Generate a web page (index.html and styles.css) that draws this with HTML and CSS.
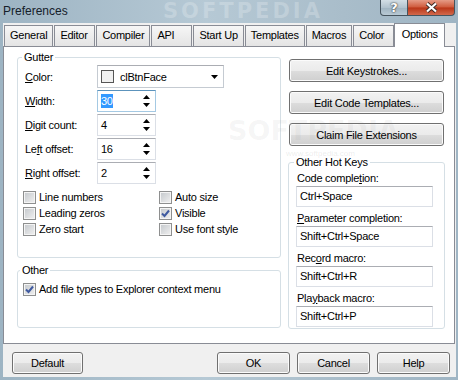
FILE: index.html
```html
<!DOCTYPE html>
<html>
<head>
<meta charset="utf-8">
<title>Preferences</title>
<link rel="stylesheet" href="styles.css">
</head>
<body>
<div class="window">
  <div class="titlebar">
    <span class="title">Preferences</span>
    <span class="watermark">SOFTPEDIA</span>
    <div class="caption-buttons">
      <div class="cap help">?</div>
      <div class="cap close">
        <svg width="13" height="11" viewBox="0 0 13 11"><path d="M2 1.5 L11 9.5 M11 1.5 L2 9.5" stroke="#3a2a26" stroke-width="4"/><path d="M2 1.5 L11 9.5 M11 1.5 L2 9.5" stroke="#fff" stroke-width="2.2"/></svg>
      </div>
    </div>
  </div>

  <div class="client">
    <div class="tabs">
      <div class="tab">General</div>
      <div class="tab">Editor</div>
      <div class="tab">Compiler</div>
      <div class="tab">API</div>
      <div class="tab">Start Up</div>
      <div class="tab">Templates</div>
      <div class="tab">Macros</div>
      <div class="tab">Color</div>
      <div class="tab active">Options</div>
    </div>

    <div class="pane">
      <div class="left">
        <fieldset class="group gutter">
          <legend>Gutter</legend>
          <div class="fields">
            <label><u>C</u>olor:</label>
            <div class="combo">
              <span class="swatch"></span>
              <span class="combo-text">clBtnFace</span>
              <svg class="drop" width="7" height="4" viewBox="0 0 7 4"><polygon points="0,0 7,0 3.5,4"/></svg>
            </div>

            <label><u>W</u>idth:</label>
            <div class="spin focused">
              <span class="val"><span class="sel">30</span></span>
              <span class="arrows">
                <svg width="7" height="4" viewBox="0 0 7 4"><polygon points="0,4 3.5,0 7,4"/></svg>
                <svg width="7" height="4" viewBox="0 0 7 4"><polygon points="0,0 7,0 3.5,4"/></svg>
              </span>
            </div>

            <label><u>D</u>igit count:</label>
            <div class="spin">
              <span class="val">4</span>
              <span class="arrows">
                <svg width="7" height="4" viewBox="0 0 7 4"><polygon points="0,4 3.5,0 7,4"/></svg>
                <svg width="7" height="4" viewBox="0 0 7 4"><polygon points="0,0 7,0 3.5,4"/></svg>
              </span>
            </div>

            <label>Le<u>f</u>t offset:</label>
            <div class="spin">
              <span class="val">16</span>
              <span class="arrows">
                <svg width="7" height="4" viewBox="0 0 7 4"><polygon points="0,4 3.5,0 7,4"/></svg>
                <svg width="7" height="4" viewBox="0 0 7 4"><polygon points="0,0 7,0 3.5,4"/></svg>
              </span>
            </div>

            <label><u>R</u>ight offset:</label>
            <div class="spin">
              <span class="val">2</span>
              <span class="arrows">
                <svg width="7" height="4" viewBox="0 0 7 4"><polygon points="0,4 3.5,0 7,4"/></svg>
                <svg width="7" height="4" viewBox="0 0 7 4"><polygon points="0,0 7,0 3.5,4"/></svg>
              </span>
            </div>
          </div>

          <div class="checks">
            <div class="check"><span class="cb"></span>Line numbers</div>
            <div class="check"><span class="cb"></span>Auto size</div>
            <div class="check"><span class="cb"></span>Leading zeros</div>
            <div class="check"><span class="cb on"><svg width="11" height="11" viewBox="0 0 11 11"><path d="M2 5.5 L4.5 8 L9 2.5" fill="none" stroke="#3f5aa0" stroke-width="2"/></svg></span>Visible</div>
            <div class="check"><span class="cb"></span>Zero start</div>
            <div class="check"><span class="cb"></span>Use font style</div>
          </div>
        </fieldset>

        <fieldset class="group other">
          <legend>Other</legend>
          <div class="check"><span class="cb on"><svg width="11" height="11" viewBox="0 0 11 11"><path d="M2 5.5 L4.5 8 L9 2.5" fill="none" stroke="#3f5aa0" stroke-width="2"/></svg></span>Add file types to Explorer context menu</div>
        </fieldset>
      </div>

      <div class="right">
        <div class="btn wide">Edit Keystrokes...</div>
        <div class="btn wide">Edit Code Templates...</div>
        <div class="btn wide">Claim File Extensions</div>

        <fieldset class="group hotkeys">
          <legend>Other Hot Keys</legend>
          <div class="hk-label">Code comple<u>t</u>ion:</div>
          <div class="edit">Ctrl+Space</div>
          <div class="hk-label"><u>P</u>arameter completion:</div>
          <div class="edit">Shift+Ctrl+Space</div>
          <div class="hk-label">Rec<u>o</u>rd macro:</div>
          <div class="edit">Shift+Ctrl+R</div>
          <div class="hk-label">Pla<u>y</u>back macro:</div>
          <div class="edit">Shift+Ctrl+P</div>
        </fieldset>
      </div>

      <div class="pane-mark">SOFTPEDIA</div>
      <div class="pane-url">www.softpedia.com</div>
    </div>

    <div class="footer">
      <div class="btn default">Default</div>
      <div class="btn ok">OK</div>
      <div class="btn">Cancel</div>
      <div class="btn">Help</div>
    </div>
  </div>
</div>
</body>
</html>
```

FILE: styles.css
```css
html, body { margin: 0; padding: 0; }
body {
  width: 458px;
  height: 380px;
  overflow: hidden;
  font: 11px "Liberation Sans", Arial, sans-serif;
  letter-spacing: -0.25px;
  color: #000;
}
.window {
  height: 380px;
  display: flex;
  flex-direction: column;
  background: linear-gradient(to right, #9db4c3, #b6c9d5 45%, #a9bdca 75%, #9fb5c4);
}

/* title bar */
.titlebar {
  height: 23px;
  display: flex;
  align-items: flex-start;
  position: relative;
}
.title {
  font-size: 12px;
  letter-spacing: 0;
  padding: 4px 0 0 3px;
  color: #15202a;
}
.watermark {
  position: absolute;
  left: 163px;
  top: 0;
  font: bold 21px "DejaVu Sans", sans-serif;
  letter-spacing: 3px;
  line-height: 22px;
  color: rgba(255, 255, 255, 0.22);
}
.caption-buttons {
  margin-left: auto;
  margin-right: 3px;
  display: flex;
}
.cap {
  height: 16px;
  box-sizing: border-box;
  border: 1px solid #46545e;
  border-top: none;
  display: flex;
  align-items: center;
  justify-content: center;
}
.help {
  width: 28px;
  border-radius: 0 0 0 4px;
  background: linear-gradient(#d3dee5, #b2c3ce 50%, #9fb3c0 51%, #b9cad5);
  color: #fff;
  font: bold 13px "DejaVu Sans", sans-serif;
  text-shadow: 0 0 2px #333, 0 0 1px #333;
}
.close {
  width: 47px;
  border-left: none;
  border-radius: 0 0 4px 0;
  background: linear-gradient(#e59b86, #cf5a3c 48%, #b93517 52%, #d2694c);
}

/* client area */
.client {
  flex: 1;
  margin: 0 2px 3px 3px;
  background: #f0f0f0;
  display: flex;
  flex-direction: column;
}
.tabs {
  height: 23px;
  display: flex;
  align-items: flex-end;
  padding-left: 1px;
  gap: 1px;
  position: relative;
  z-index: 1;
}
.tab {
  height: 21px;
  box-sizing: border-box;
  min-width: 41px;
  white-space: nowrap;
  padding: 3px 5px 0 5px;
  border: 1px solid #898c95;
  border-bottom: none;
  background: linear-gradient(#f6f6f6, #e4e4e4);
}
.tab.active {
  height: 24px;
  margin-bottom: -1px;
  margin-left: -1px;
  min-width: 51px;
  padding-top: 4px;
  text-align: center;
  background: #fff;
}

.pane {
  height: 298px;
  box-sizing: border-box;
  margin-right: 1px;
  border: 1px solid #898c95;
  background: #fff;
  display: grid;
  grid-template-columns: 264px 157px;
  column-gap: 7px;
  align-items: start;
  padding: 4px 0 0 13px;
  position: relative;
}

/* group boxes */
.group {
  margin: 0;
  border: 1px solid #d5dfe5;
  border-radius: 3px;
  min-width: 0;
}
.group legend {
  line-height: 13px;
  padding: 0 2px;
  margin-left: -3px;
}
.gutter {
  padding: 1px 7px 20px 7px;
}
.fields {
  display: grid;
  grid-template-columns: 72px auto;
  row-gap: 2px;
  align-items: center;
  justify-items: start;
}
.combo {
  width: 127px;
  height: 23px;
  box-sizing: border-box;
  border: 1px solid #c5cbd2;
  border-top-color: #abadb3;
  display: flex;
  align-items: center;
}
.swatch {
  width: 13px;
  height: 13px;
  box-sizing: border-box;
  border: 1px solid #555;
  background: #f0f0f0;
  margin: 0 6px 0 3px;
}
.combo-text { flex: 1; }
.drop { margin-right: 5px; }
.spin {
  width: 59px;
  height: 22px;
  box-sizing: border-box;
  border: 1px solid #dbdfe6;
  border-top-color: #abadb3;
  display: flex;
  align-items: center;
}
.spin.focused {
  border-color: #a4c9e3;
  border-top-color: #5c93bc;
}
.val {
  flex: 1;
  padding-left: 3px;
}
.sel {
  background: #3399ff;
  color: #fff;
  padding: 1px 0;
}
.arrows {
  width: 17px;
  display: flex;
  flex-direction: column;
  align-items: center;
  gap: 4px;
}

.checks {
  display: grid;
  grid-template-columns: 136px auto;
  margin: 5px 0 0 -2px;
}
.check {
  height: 16px;
  display: flex;
  align-items: center;
  white-space: nowrap;
}
.cb {
  width: 13px;
  height: 13px;
  box-sizing: border-box;
  border: 1px solid #8e8f8f;
  background: linear-gradient(135deg, #c3c7cb, #f1f1f1);
  box-shadow: inset 0 0 0 1px #f4f4f4;
  margin-right: 3px;
  display: flex;
  align-items: center;
  justify-content: center;
}
.other {
  margin-top: 6px;
  padding: 4px 7px 30px 5px;
}

/* right column */
.right {
  display: flex;
  flex-direction: column;
}
.btn {
  height: 23px;
  box-sizing: border-box;
  border: 1px solid #707070;
  border-radius: 3px;
  background: linear-gradient(#f2f2f2, #ebebeb 50%, #dddddd 51%, #cfcfcf);
  box-shadow: inset 0 0 0 1px #fbfbfb;
  display: flex;
  align-items: center;
  justify-content: center;
  white-space: nowrap;
}
.btn.wide {
  margin: 0 1px 9px 1px;
}
.btn.wide:first-child { margin-top: 8px; }
.hotkeys {
  margin-top: 1px;
  padding: 1px 11px 1px 8px;
}
.hk-label {
  line-height: 16px;
  height: 16px;
  white-space: nowrap;
}
.edit {
  height: 21px;
  box-sizing: border-box;
  margin: 0 0 3px -1px;
  border: 1px solid #dbdfe6;
  border-top-color: #abadb3;
  padding: 3px 0 0 3px;
}
.edit:last-child { margin-bottom: 0; }

/* watermark over pane */
.pane-mark {
  position: absolute;
  left: 224px;
  top: 68px;
  font: bold 27px "DejaVu Sans", sans-serif;
  letter-spacing: 0;
  color: rgba(120, 120, 120, 0.07);
  pointer-events: none;
}
.pane-url {
  position: absolute;
  left: 282px;
  top: 102px;
  font-size: 8px;
  letter-spacing: 0;
  color: rgba(120, 120, 120, 0.15);
  pointer-events: none;
}

/* bottom buttons */
.footer {
  flex: 1;
  display: flex;
  align-items: flex-start;
  padding: 8px 6px 0 9px;
  gap: 7px;
}
.footer .btn {
  width: 73px;
  height: 22px;
}
.footer .default {
  width: 71px;
}
.footer .ok {
  margin-left: auto;
}
```
